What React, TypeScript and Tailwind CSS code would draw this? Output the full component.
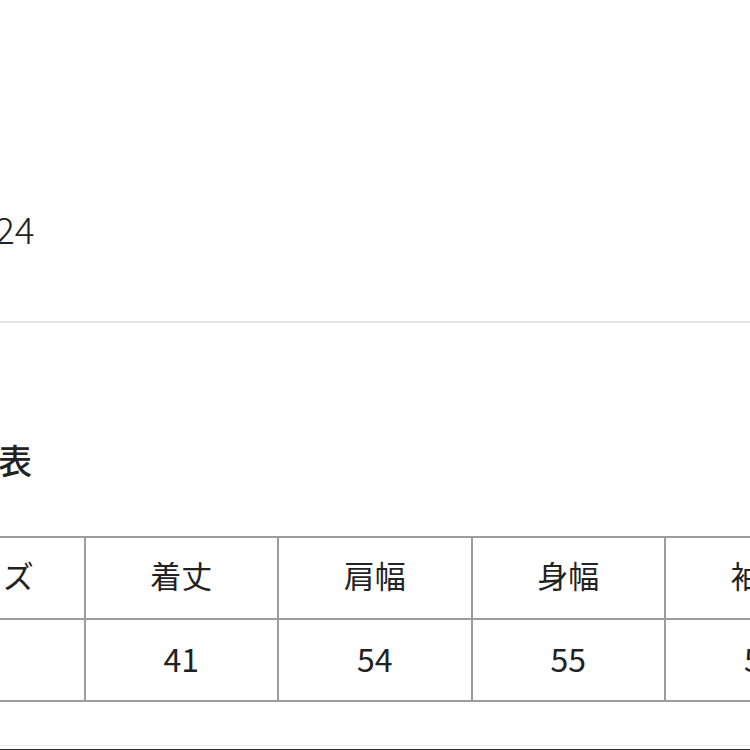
const headers = ["サイズ", "着丈", "肩幅", "身幅", "袖丈"];
const values = ["M", "41", "54", "55", "57"];

export default function App() {
  return (
    <div
      className="relative w-[750px] h-[750px] overflow-hidden bg-white text-[#222]"
      style={{ fontFamily: '"Noto Sans CJK JP", "Noto Sans", sans-serif' }}
    >
      <div className="h-[206px]" />
      <p className="text-[37px] leading-[44px] ml-[-5px] font-light">24</p>
      <div className="h-[71px]" />
      <div className="h-[2px] bg-[#e4e4e4]" />
      <div className="h-[117px]" />
      <h2 className="text-[34px] leading-[40px] font-medium ml-[-103px] whitespace-nowrap">
        サイズ表
      </h2>
      <div className="h-[56px]" />
      <div className="ml-[-110px] w-[980px] bg-[#9c9c9c] p-[2px] grid grid-cols-[repeat(5,191.5px)] gap-[2px]">
        {headers.map((h) => (
          <div key={h} className="bg-white h-[80px] pb-[6px] flex items-center justify-center text-[31px]">
            {h}
          </div>
        ))}
        {values.map((v, i) => (
          <div key={i} className="bg-white h-[80px] pb-[5px] flex items-center justify-center text-[32px]">
            {i === 0 ? "" : v}
          </div>
        ))}
      </div>
      <div className="h-[43px]" />
      <div className="h-[1px] bg-[#ededed]" />
      <div className="h-[3px]" />
      <div className="h-[3px] bg-[#333]" />
    </div>
  );
}
